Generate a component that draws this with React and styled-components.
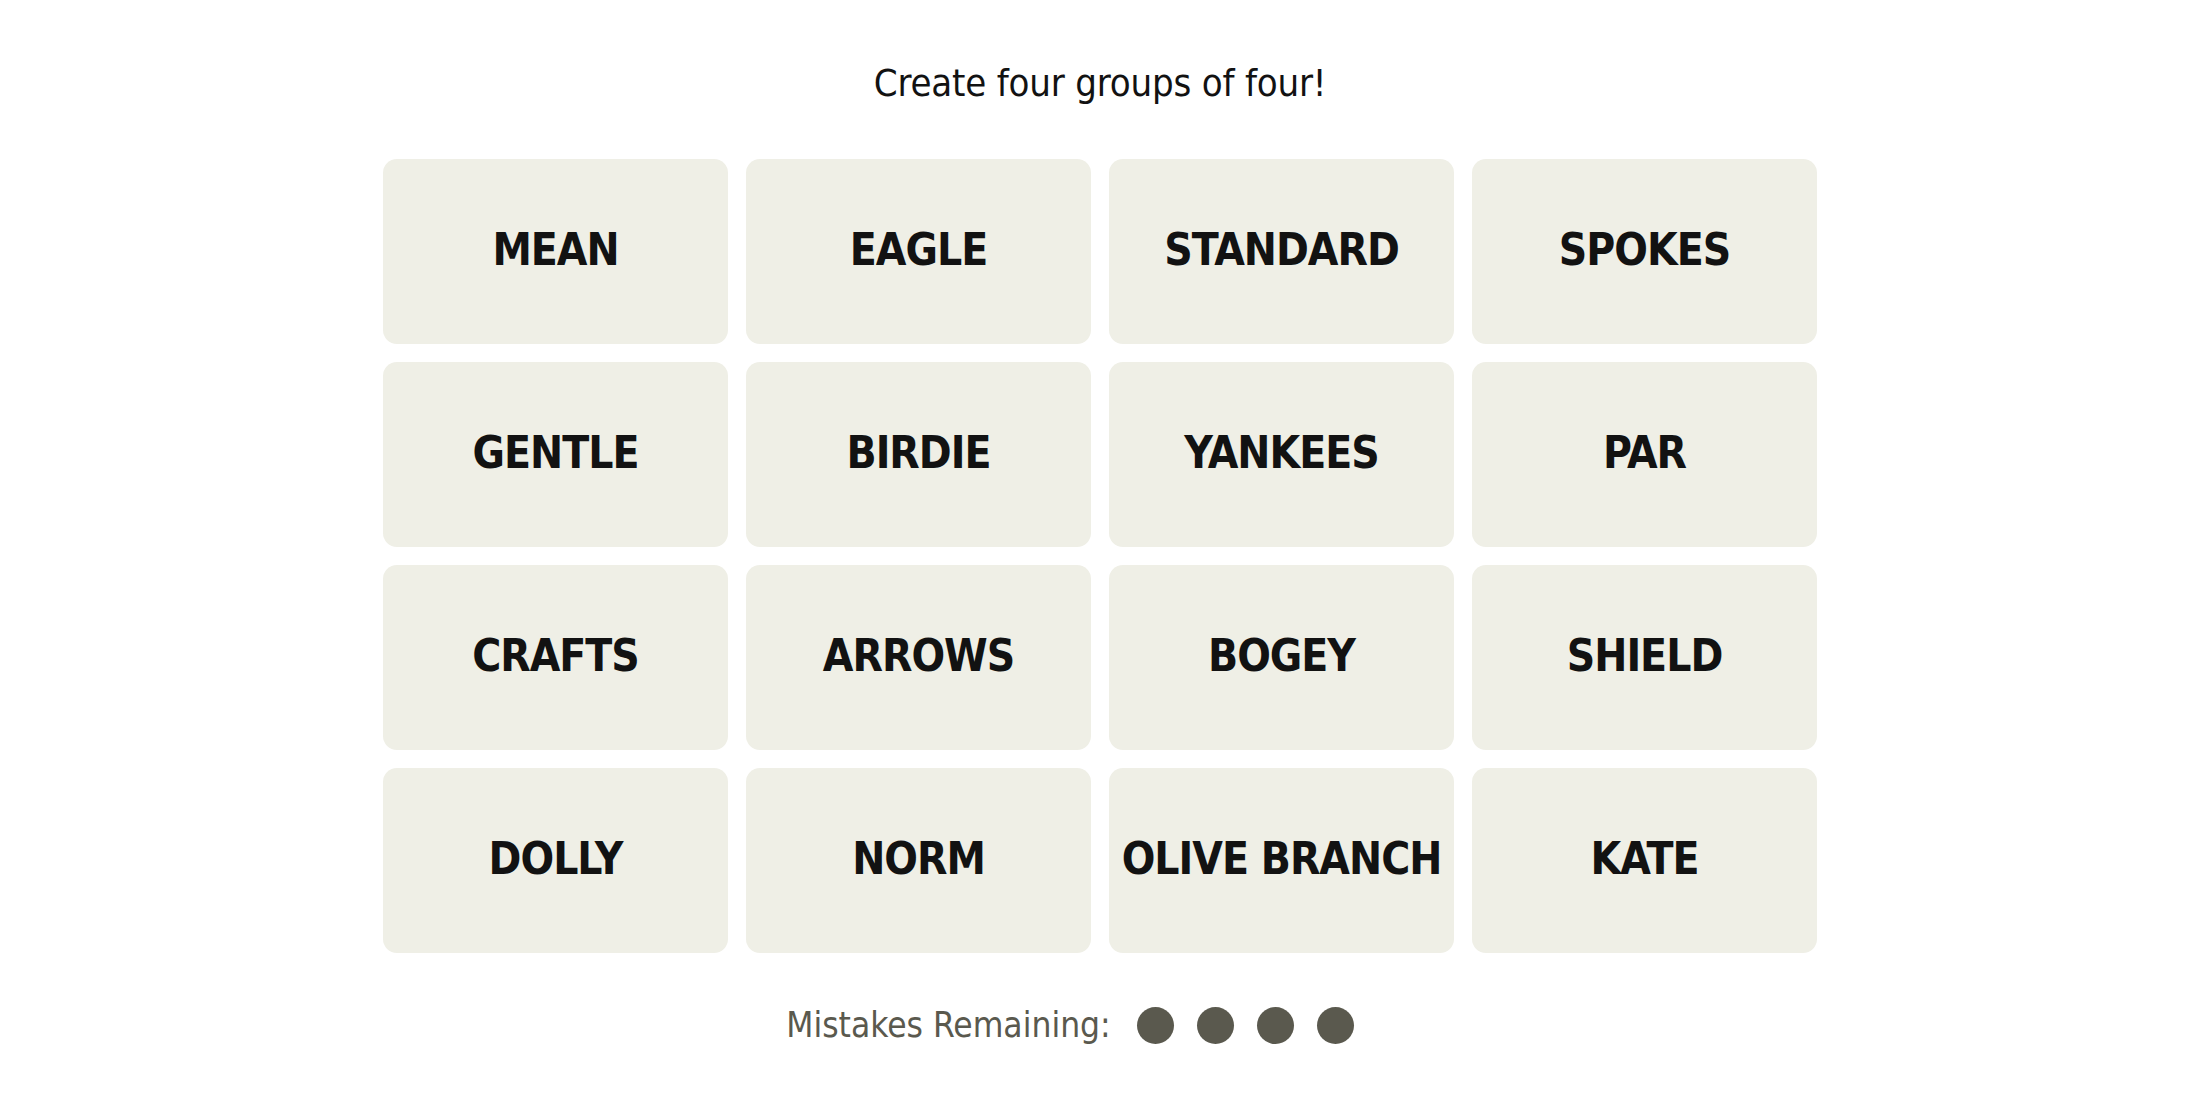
import React from 'react'
import styled, { createGlobalStyle } from 'styled-components'

const words = [
  'MEAN', 'EAGLE', 'STANDARD', 'SPOKES',
  'GENTLE', 'BIRDIE', 'YANKEES', 'PAR',
  'CRAFTS', 'ARROWS', 'BOGEY', 'SHIELD',
  'DOLLY', 'NORM', 'OLIVE BRANCH', 'KATE',
]

const GlobalStyle = createGlobalStyle`
  body {
    margin: 0;
    background: #ffffff;
    font-family: "Liberation Sans Narrow", "DejaVu Sans Condensed", "Liberation Sans", sans-serif;
  }
`

const Page = styled.div`
  display: flex;
  flex-direction: column;
  align-items: center;
  padding-top: 56px;
`

const Title = styled.p`
  margin: 0;
  font-size: 38px;
  line-height: 54px;
  letter-spacing: -0.2px;
  color: #121212;
`

const Grid = styled.div`
  display: grid;
  grid-template-columns: repeat(4, 345px);
  grid-auto-rows: 185px;
  gap: 18px;
  margin-top: 49px;
`

const Tile = styled.button`
  border: none;
  border-radius: 14px;
  background: #efefe6;
  color: #121212;
  font-family: inherit;
  font-weight: 700;
  font-size: 44px;
  letter-spacing: -1px;
  white-space: nowrap;
  display: flex;
  align-items: center;
  justify-content: center;
  padding: 0 0 4px;
  cursor: pointer;
`

const Mistakes = styled.div`
  display: flex;
  align-items: center;
  margin-top: 52px;
  margin-right: 60px;
  font-size: 35px;
  color: #5a594e;
`

const Dots = styled.div`
  display: flex;
  gap: 23px;
  margin-left: 26px;
`

const Dot = styled.span`
  width: 37px;
  height: 37px;
  border-radius: 50%;
  background: #5a594e;
`

const App = () => {
  return (
    <>
      <GlobalStyle />
      <Page>
        <Title>Create four groups of four!</Title>
        <Grid>
          {words.map(w => <Tile key={w}>{w}</Tile>)}
        </Grid>
        <Mistakes>
          Mistakes Remaining:
          <Dots>
            {[0, 1, 2, 3].map(i => <Dot key={i} />)}
          </Dots>
        </Mistakes>
      </Page>
    </>
  )
}

export default App
